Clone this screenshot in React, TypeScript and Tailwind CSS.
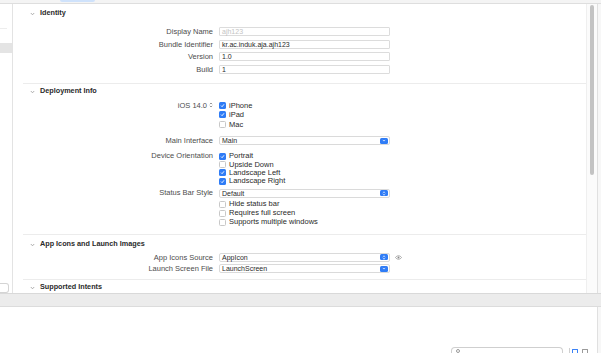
import React from 'react';

const Chevron = () => (
  <svg width="5" height="4" viewBox="0 0 5 4" className="shrink-0">
    <path d="M0.8 1 L2.5 2.8 L4.2 1" fill="none" stroke="#9a9a9a" strokeWidth="0.8" />
  </svg>
);

const SectionHeader: React.FC<{ title: string; h: string }> = ({ title, h }) => (
  <div className={`flex items-center pl-[17px] gap-[5px] ${h}`}>
    <Chevron />
    <span className="text-[7.25px] font-bold text-[#2a2a2a]">{title}</span>
  </div>
);

const Separator: React.FC<{ mt: string }> = ({ mt }) => (
  <div className={`ml-[10px] h-px bg-[#ececec] ${mt}`} />
);

const Row: React.FC<{ label?: React.ReactNode; h: string; children?: React.ReactNode }> = ({ label, h, children }) => (
  <div className={`flex items-center ${h}`}>
    <div className="w-[200px] text-right text-[7.5px] text-[#4d4d4d] leading-none">{label}</div>
    <div className="ml-[6px] flex items-center">{children}</div>
  </div>
);

const TextField: React.FC<{ value: string; placeholder?: boolean }> = ({ value, placeholder }) => (
  <div className="w-[171px] h-[9px] border border-[#dcdcdc] rounded-[1px] bg-white flex items-center pl-[2px]">
    <span className={`text-[7px] leading-none ${placeholder ? 'text-[#c4c4c4]' : 'text-[#2a2a2a]'}`}>{value}</span>
  </div>
);

const Popup: React.FC<{ value: string; updown?: boolean }> = ({ value, updown }) => (
  <div className="w-[171px] h-[9px] border border-[#dadada] rounded-[2px] bg-white flex items-center justify-between pl-[2px] pr-[1px]">
    <span className="text-[7px] leading-none text-[#2a2a2a]">{value}</span>
    <div className="w-[8px] h-[6px] rounded-[1.5px] bg-[#2f7cf6] flex items-center justify-center">
      {updown ? (
        <svg width="4" height="5" viewBox="0 0 4 5">
          <path d="M0.8 1.9 L2 0.8 L3.2 1.9 M0.8 3.1 L2 4.2 L3.2 3.1" fill="none" stroke="white" strokeWidth="0.7" />
        </svg>
      ) : (
        <svg width="4" height="3" viewBox="0 0 4 3">
          <path d="M0.8 0.9 L2 2.1 L3.2 0.9" fill="none" stroke="white" strokeWidth="0.7" />
        </svg>
      )}
    </div>
  </div>
);

const Check: React.FC<{ label: string; checked?: boolean }> = ({ label, checked }) => (
  <div className="flex items-center gap-[3px]">
    {checked ? (
      <div className="w-[7px] h-[7px] rounded-[1.5px] bg-[#2f7cf6] flex items-center justify-center">
        <svg width="5" height="5" viewBox="0 0 5 5">
          <path d="M1 2.6 L2.1 3.7 L4 1.3" fill="none" stroke="white" strokeWidth="0.9" />
        </svg>
      </div>
    ) : (
      <div className="w-[7px] h-[7px] rounded-[1.5px] border border-[#c8c8c8] bg-white" />
    )}
    <span className="text-[7.5px] leading-none text-[#2a2a2a]">{label}</span>
  </div>
);

export default function App() {
  return (
    <div className="w-[601px] h-[353px] overflow-hidden bg-white flex flex-col font-['Liberation_Sans',Arial,sans-serif]">
      {/* top strip */}
      <div className="h-[4px] shrink-0 bg-[#f4f4f4] border-b border-[#dedede] flex">
        <div className="ml-[60px] w-[35px] h-[2px] rounded-b-[2px] bg-[#cfe2fb]" />
      </div>

      {/* middle */}
      <div className="h-[290px] shrink-0 flex border-b border-[#d9d9d9]">
        {/* sidebar */}
        <div className="w-[13px] shrink-0 border-r border-[#e3e3e3] flex flex-col">
          <div className="mt-[24px] w-[7px] h-px bg-[#ededed]" />
          <div className="mt-[14px] w-[12px] h-[10px] bg-[#e4e4e4]" />
          <div className="mt-auto w-[9px] h-[10px] border border-[#d4d4d4] rounded-r-[3px] border-l-0" />
        </div>

        {/* editor */}
        <div className="flex-1 flex flex-col overflow-hidden pt-[2px]">
          <SectionHeader title="Identity" h="h-[18px]" />
          <div className="mt-[4px]">
            <Row label="Display Name" h="h-[12.5px]"><TextField value="ajh123" placeholder /></Row>
            <Row label="Bundle Identifier" h="h-[12.5px]"><TextField value="kr.ac.induk.aja.ajh123" /></Row>
            <Row label="Version" h="h-[12.5px]"><TextField value="1.0" /></Row>
            <Row label="Build" h="h-[12.5px]"><TextField value="1" /></Row>
          </div>
          <Separator mt="mt-[7px]" />

          <SectionHeader title="Deployment Info" h="h-[17px] pt-[1px]" />
          <div className="mt-[2px]">
            <Row
              h="h-[9.5px]"
              label={
                <span className="inline-flex items-center gap-[2px]">
                  iOS 14.0
                  <svg width="4" height="6" viewBox="0 0 4 6">
                    <path d="M0.8 2.2 L2 1 L3.2 2.2 M0.8 3.8 L2 5 L3.2 3.8" fill="none" stroke="#555" strokeWidth="0.6" />
                  </svg>
                </span>
              }
            >
              <Check label="iPhone" checked />
            </Row>
            <Row h="h-[9.5px]"><Check label="iPad" checked /></Row>
            <Row h="h-[9.5px]"><Check label="Mac" /></Row>
          </div>
          <div className="mt-[5px]">
            <Row label="Main Interface" h="h-[13px]"><Popup value="Main" /></Row>
          </div>
          <div className="mt-[5px]">
            <Row label="Device Orientation" h="h-[8.3px]"><Check label="Portrait" checked /></Row>
            <Row h="h-[8.3px]"><Check label="Upside Down" /></Row>
            <Row h="h-[8.3px]"><Check label="Landscape Left" checked /></Row>
            <Row h="h-[8.3px]"><Check label="Landscape Right" checked /></Row>
          </div>
          <div className="mt-[1.5px]">
            <Row label="Status Bar Style" h="h-[13px]"><Popup value="Default" updown /></Row>
            <Row h="h-[9px]"><Check label="Hide status bar" /></Row>
            <Row h="h-[9px]"><Check label="Requires full screen" /></Row>
            <Row h="h-[9px]"><Check label="Supports multiple windows" /></Row>
          </div>
          <Separator mt="mt-[7px]" />

          <SectionHeader title="App Icons and Launch Images" h="h-[19px] pt-[3px]" />
          <Row label="App Icons Source" h="h-[13px]">
            <Popup value="AppIcon" updown />
            <svg width="7" height="5" viewBox="0 0 7 5" className="ml-[5px]">
              <path d="M0.5 2.5 C2 0.2 5 0.2 6.5 2.5 C5 4.8 2 4.8 0.5 2.5 Z" fill="none" stroke="#8a8a8a" strokeWidth="0.7" />
              <circle cx="3.5" cy="2.5" r="1" fill="#8a8a8a" />
            </svg>
          </Row>
          <Row label="Launch Screen File" h="h-[13px]"><Popup value="LaunchScreen" /></Row>
          <Separator mt="mt-[5px]" />

          <SectionHeader title="Supported Intents" h="h-[14px] pt-[2px]" />
        </div>

        {/* scrollbar */}
        <div className="w-[11px] shrink-0 border-l border-[#efefef] bg-[#fbfbfb] flex justify-center pt-[1px]">
          <div className="w-[4px] h-[170px] rounded-full bg-[#c3c3c3]" />
        </div>
        <div className="w-[4px] shrink-0 border-l border-[#e0e0e0] bg-[#f7f7f7]" />
      </div>

      {/* gray bar */}
      <div className="h-[13px] shrink-0 bg-[#ececec] border-b border-[#dcdcdc]" />

      {/* bottom */}
      <div className="flex-1 flex">
        <div className="flex-1 flex items-end justify-end pr-[9px]">
          <div className="w-[112px] h-[6px] rounded-t-[4px] border border-b-0 border-[#cfcfcf] flex items-start pl-[4px] pt-[1px]">
            <div className="w-[4px] h-[4px] rounded-full border border-[#9a9a9a]" />
          </div>
          <div className="ml-[6px] w-px h-[5px] bg-[#cfcfcf]" />
          <div className="ml-[2px] w-[6px] h-[4px] border border-b-0 border-[#3b82f6] rounded-t-[1px]" />
          <div className="ml-[4px] w-[6px] h-[4px] border border-b-0 border-[#9a9a9a] rounded-t-[1px]" />
        </div>
        <div className="w-[4px] shrink-0 border-l border-[#e0e0e0] bg-[#f7f7f7]" />
      </div>
    </div>
  );
}
